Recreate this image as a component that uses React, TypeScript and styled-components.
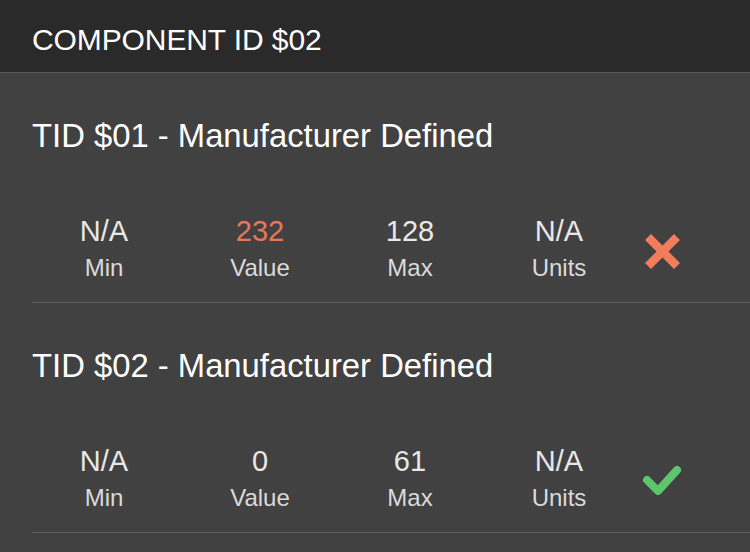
import React from "react";
import styled, { createGlobalStyle } from "styled-components";

const GlobalStyle = createGlobalStyle`
  html, body {
    margin: 0;
    padding: 0;
    background: #414141;
  }
  body {
    font-family: "Liberation Sans", Arial, sans-serif;
    -webkit-font-smoothing: antialiased;
  }
`;

const Page = styled.div`
  width: 750px;
  min-height: 552px;
  background: #414141;
  overflow: hidden;
`;

const Header = styled.header`
  height: 65px;
  padding: 7px 0 0 32px;
  line-height: 65px;
  background: #2a2a2a;
  border-bottom: 1px solid #575757;
  color: #ffffff;
  font-size: 30px;
  letter-spacing: -0.1px;
`;

const Section = styled.section`
  margin-left: 32px;
  padding: 43px 0 20px 0;
  border-bottom: 1px solid #5e5e5e;
`;

const Title = styled.h2`
  margin: 0;
  font-weight: 400;
  font-size: 32.8px;
  line-height: 39px;
  color: #ffffff;
`;

const StatsRow = styled.div`
  margin-top: 59px;
  display: grid;
  grid-template-columns: 144px 168px 132px 166px 40px;
  align-items: center;
`;

const Stat = styled.div`
  display: flex;
  flex-direction: column;
  align-items: center;
`;

const StatValue = styled.span<{ $alert?: boolean }>`
  font-size: 29px;
  line-height: 34px;
  color: ${(p) => (p.$alert ? "#e5785c" : "#e8e8e8")};
`;

const StatLabel = styled.span`
  margin-top: 6px;
  font-size: 24px;
  line-height: 28px;
  color: #dadada;
`;

const StatusIcon = styled.svg`
  display: block;
  margin-top: 6px;
`;

const FailIcon = () => (
  <StatusIcon width="40" height="40" viewBox="0 0 40 40">
    <g stroke="#f07d5b" strokeWidth="8.5" strokeLinecap="butt">
      <line x1="6" y1="6" x2="35" y2="35" />
      <line x1="35" y1="6" x2="6" y2="35" />
    </g>
  </StatusIcon>
);

const PassIcon = () => (
  <StatusIcon width="40" height="32" viewBox="0 0 40 32">
    <polyline
      points="5,15 16,26 35,5"
      fill="none"
      stroke="#5dc56b"
      strokeWidth="8"
      strokeLinecap="round"
      strokeLinejoin="round"
    />
  </StatusIcon>
);

type Test = {
  title: string;
  min: string;
  value: string;
  max: string;
  units: string;
  pass: boolean;
};

const tests: Test[] = [
  { title: "TID $01 - Manufacturer Defined", min: "N/A", value: "232", max: "128", units: "N/A", pass: false },
  { title: "TID $02 - Manufacturer Defined", min: "N/A", value: "0", max: "61", units: "N/A", pass: true },
];

export default function App() {
  return (
    <>
      <GlobalStyle />
      <Page>
        <Header>COMPONENT ID $02</Header>
        {tests.map((t) => (
          <Section key={t.title}>
            <Title>{t.title}</Title>
            <StatsRow>
              <Stat>
                <StatValue>{t.min}</StatValue>
                <StatLabel>Min</StatLabel>
              </Stat>
              <Stat>
                <StatValue $alert={!t.pass}>{t.value}</StatValue>
                <StatLabel>Value</StatLabel>
              </Stat>
              <Stat>
                <StatValue>{t.max}</StatValue>
                <StatLabel>Max</StatLabel>
              </Stat>
              <Stat>
                <StatValue>{t.units}</StatValue>
                <StatLabel>Units</StatLabel>
              </Stat>
              {t.pass ? <PassIcon /> : <FailIcon />}
            </StatsRow>
          </Section>
        ))}
      </Page>
    </>
  );
}
